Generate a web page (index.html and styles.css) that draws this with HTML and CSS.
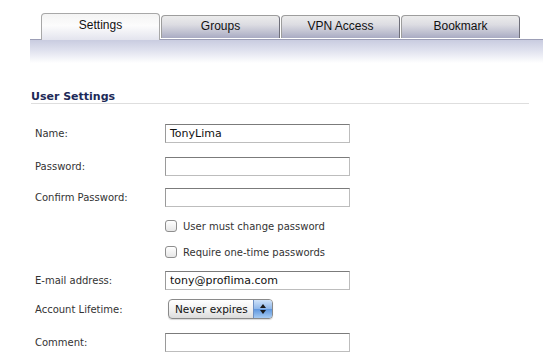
FILE: index.html
```html
<!DOCTYPE HTML>
<html>

<head>
    <meta charset="utf-8">
    <title>User Settings</title>
    <link rel="stylesheet" href="styles.css">
</head>

<body>
    <div class="page">
        <ul class="tabs">
            <li class="tab ac">Settings</li>
            <li class="tab">Groups</li>
            <li class="tab">VPN Access</li>
            <li class="tab">Bookmark</li>
        </ul>
        <div class="band"></div>

        <h2 class="section-title">User Settings</h2>

        <div class="form">
            <div class="row row-name">
                <label class="label">Name:</label>
                <div class="field">TonyLima</div>
            </div>
            <div class="row">
                <label class="label">Password:</label>
                <div class="field"></div>
            </div>
            <div class="row">
                <label class="label">Confirm Password:</label>
                <div class="field"></div>
            </div>
            <div class="row row-check">
                <span class="label"></span>
                <span class="check"></span>
                <span class="check-text">User must change password</span>
            </div>
            <div class="row row-check">
                <span class="label"></span>
                <span class="check"></span>
                <span class="check-text">Require one-time passwords</span>
            </div>
            <div class="row">
                <label class="label">E-mail address:</label>
                <div class="field">tony@proflima.com</div>
            </div>
            <div class="row row-select">
                <label class="label">Account Lifetime:</label>
                <div class="popup">
                    <span class="popup-text">Never expires</span>
                    <span class="popup-btn">
                        <svg width="8" height="12" viewBox="0 0 8 12">
                            <path d="M4 1 L7 5 L1 5 Z" fill="#1a1a1a" />
                            <path d="M4 11 L7 7 L1 7 Z" fill="#1a1a1a" />
                        </svg>
                    </span>
                </div>
            </div>
            <div class="row">
                <label class="label">Comment:</label>
                <div class="field"></div>
            </div>
        </div>
    </div>
</body>

</html>
```

FILE: styles.css
```css
* {
    margin: 0;
    padding: 0;
    box-sizing: border-box;
}

li {
    list-style: none;
}

body {
    background: #fff;
    font-family: "DejaVu Sans", Verdana, sans-serif;
    color: #333;
}

.page {
    padding-left: 30px;
    padding-top: 13px;
}

.tabs {
    display: flex;
    align-items: flex-end;
    gap: 1px;
    margin-left: 11px;
    height: 26px;
}

.tab {
    width: 119px;
    height: 23px;
    margin-bottom: 1px;
    border: 1px solid #9d9d9d;
    border-right-color: #6f6f7a;
    border-bottom: none;
    border-radius: 4px 4px 0 0;
    background: linear-gradient(#ececec, #dcdce2 40%, #a9abc3);
    font-family: "Liberation Sans", Arial, sans-serif;
    font-size: 12px;
    color: #111;
    text-align: center;
    line-height: 20px;
}

.tab.ac {
    height: 27px;
    margin-bottom: -1px;
    border-color: #a8a8a8;
    background: linear-gradient(#f4f4f4, #fcfcfc 45%, #e3e4ee);
    line-height: 22px;
    position: relative;
    z-index: 2;
}

.band {
    height: 24px;
    border-top: 1px solid #9c9eb6;
    background: linear-gradient(#c9cce0, #dfe1ee 45%, #fff);
}

.section-title {
    margin-top: 27px;
    margin-left: 1px;
    width: 498px;
    font-size: 11px;
    font-weight: bold;
    color: #1d2a58;
    line-height: 13px;
    border-bottom: 1px solid #dedede;
}

.form {
    padding-left: 5px;
    padding-top: 20px;
    display: flex;
    flex-direction: column;
    gap: 12px;
}

.row {
    display: flex;
    align-items: center;
    height: 19px;
}

.row-name {
    margin-bottom: 2px;
}

.label {
    width: 130px;
    flex: none;
    font-size: 10px;
    color: #333;
}

.field {
    width: 185px;
    height: 19px;
    border: 1px solid #bdbdbd;
    border-top-color: #7b7b7b;
    border-left-color: #9a9a9a;
    background: #fff;
    font-size: 11px;
    color: #111;
    padding-left: 4px;
    line-height: 17px;
}

.row-check {
    height: 14px;
}

.check {
    width: 12px;
    height: 12px;
    border: 1px solid #8e8e8e;
    border-radius: 3px;
    background: linear-gradient(#fff, #e6e6e6);
    flex: none;
}

.check-text {
    margin-left: 6px;
    font-size: 10px;
    color: #333;
}

.row-select {
    height: 20px;
    margin-top: -3px;
    margin-bottom: 2px;
}

.popup {
    margin-left: 3px;
    width: 105px;
    height: 20px;
    display: flex;
    border: 1px solid #8a8a8a;
    border-radius: 4px;
    overflow: hidden;
    background: linear-gradient(#fff, #f2f2f2 50%, #dcdcdc);
    box-shadow: 0 1px 1px rgba(0, 0, 0, 0.15);
}

.popup-text {
    flex: 1;
    font-size: 10.5px;
    color: #111;
    padding-left: 6px;
    line-height: 18px;
    white-space: nowrap;
}

.popup-btn {
    width: 19px;
    flex: none;
    display: flex;
    align-items: center;
    justify-content: center;
    border-left: 1px solid #6d8fc2;
    background: linear-gradient(#cfe2f8, #8db6ea 50%, #5e96de 51%, #a6cbf3);
}
```
